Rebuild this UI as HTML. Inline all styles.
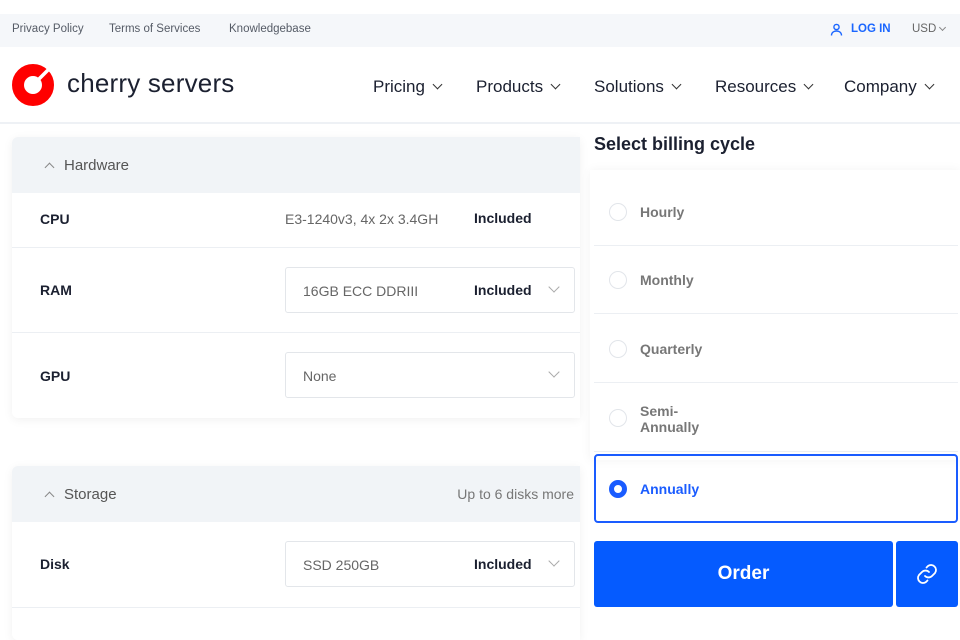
<!DOCTYPE html>
<html><head><style>
*{margin:0;padding:0;box-sizing:border-box}
body{width:960px;height:640px;overflow:hidden;background:#fff;font-family:"Liberation Sans",Arial,sans-serif;position:relative;color:#1b2030}
.abs{position:absolute}
.top{left:0;top:14px;width:960px;height:33px;background:#f5f7fa;font-size:11.5px;color:#555b66}
.top span{position:absolute;top:9px}
.nav{top:48px;left:0;width:960px;height:76px;border-bottom:2px solid #eef1f5}
.nav .m{position:absolute;top:29px;font-size:17px;color:#1b2030}
.chev{display:inline-block;width:7px;height:7px;border-right:1.6px solid #333;border-bottom:1.6px solid #333;transform:rotate(45deg);margin-left:9px;position:relative;top:-4px}
.card{left:12px;width:568px;background:#fff;box-shadow:0 2px 10px rgba(0,0,0,.06);border-radius:6px 0 0 6px;overflow:hidden}
.hd{height:56px;background:#f1f4f7;position:relative;font-size:15px;color:#555}
.hd .t{position:absolute;left:52px;top:20px}
.up{position:absolute;left:34px;top:27px;width:7px;height:7px;border-left:1.3px solid #888;border-top:1.3px solid #888;transform:rotate(45deg)}
.row{position:relative;border-bottom:1px solid #eceff3}
.row .l{position:absolute;left:28px;font-size:14px;font-weight:bold;color:#1b2030}
.sel{position:absolute;left:273px;width:290px;height:46px;border:1px solid #e3e6ea;border-radius:3px;font-size:14px;color:#666}
.sel .v{position:absolute;left:17px;top:15px}
.sel .inc{position:absolute;left:188px;top:14px;font-weight:bold;color:#1b2030}
.sel .dc{position:absolute;right:16px;top:15px;width:8px;height:8px;border-right:1.2px solid #aaa;border-bottom:1.2px solid #aaa;transform:rotate(45deg)}
.opt{left:594px;width:364px;height:68px;border-bottom:1px solid #eceff3;font-size:14px;font-weight:bold;color:#777}
.opt .r{position:absolute;left:15px;top:25px;width:18px;height:18px;border:1.3px solid #e2e5ea;border-radius:50%}
.opt .n{position:absolute;left:46px;top:26px}
</style></head><body>
<div class="abs top">
<span style="left:12px">Privacy Policy</span><span style="left:109px">Terms of Services</span><span style="left:229px">Knowledgebase</span>
<svg style="position:absolute;left:830px;top:9px" width="13" height="13" viewBox="0 0 13 13" fill="none" stroke="#1a66ff" stroke-width="1.4"><circle cx="6.5" cy="4" r="2.6"/><path d="M1.5 12.5c0-3 2.2-4.5 5-4.5s5 1.5 5 4.5"/></svg>
<span style="left:851px;color:#1a66ff;font-weight:bold">LOG IN</span>
<span style="left:912px;color:#666">USD</span>
<span style="left:940px;top:11px;width:5px;height:5px;border-right:1px solid #888;border-bottom:1px solid #888;transform:rotate(45deg)"></span>
</div>
<div class="abs nav">
<svg style="position:absolute;left:12px;top:16px" width="44" height="44" viewBox="0 0 44 44"><circle cx="21" cy="21" r="15" fill="none" stroke="#f00" stroke-width="12"/><path d="M27 15 L40 2" stroke="#fff" stroke-width="3.5"/></svg>
<div style="position:absolute;left:67px;top:20px;font-size:26px;color:#1b2030;letter-spacing:.2px">cherry servers</div>
<span class="m" style="left:373px">Pricing<i class="chev"></i></span>
<span class="m" style="left:476px">Products<i class="chev"></i></span>
<span class="m" style="left:594px">Solutions<i class="chev"></i></span>
<span class="m" style="left:715px">Resources<i class="chev"></i></span>
<span class="m" style="left:844px">Company<i class="chev"></i></span>
</div>

<div class="abs card" style="top:137px;height:281px">
<div class="hd"><i class="up"></i><span class="t">Hardware</span></div>
<div class="row" style="height:55px"><span class="l" style="top:18px">CPU</span>
<span style="position:absolute;left:273px;top:18px;font-size:14px;color:#666">E3-1240v3, 4x 2x 3.4GH</span>
<span style="position:absolute;left:462px;top:17px;font-size:14px;font-weight:bold">Included</span></div>
<div class="row" style="height:85px"><span class="l" style="top:34px">RAM</span>
<div class="sel" style="top:19px"><span class="v">16GB ECC DDRIII</span><span class="inc">Included</span><i class="dc"></i></div></div>
<div class="row" style="height:85px;border:0"><span class="l" style="top:35px">GPU</span>
<div class="sel" style="top:19px"><span class="v">None</span><i class="dc"></i></div></div>
</div>

<div class="abs card" style="top:466px;height:174px">
<div class="hd"><i class="up"></i><span class="t">Storage</span><span style="position:absolute;right:6px;top:20px;font-size:14px;color:#777">Up to 6 disks more</span></div>
<div class="row" style="height:86px"><span class="l" style="top:34px">Disk</span>
<div class="sel" style="top:19px"><span class="v">SSD 250GB</span><span class="inc">Included</span><i class="dc"></i></div></div>
</div>

<div class="abs" style="left:594px;top:134px;font-size:18px;font-weight:bold;color:#1b2030">Select billing cycle</div>
<div class="abs" style="left:590px;top:170px;width:370px;height:290px;box-shadow:0 0 10px rgba(0,0,0,.05)"></div>
<div class="abs opt" style="top:178px"><i class="r"></i><span class="n">Hourly</span></div>
<div class="abs opt" style="top:246px"><i class="r"></i><span class="n">Monthly</span></div>
<div class="abs opt" style="top:315px"><i class="r"></i><span class="n">Quarterly</span></div>
<div class="abs opt" style="top:384px"><i class="r"></i><span class="n" style="top:19px;line-height:16px">Semi-<br>Annually</span></div>
<div class="abs opt" style="top:454px;border:2px solid #1a5cff;border-radius:4px;height:69px"><i class="r" style="border:5px solid #1a5cff;left:13px;top:24px"></i><span class="n" style="color:#1a5cff;left:44px;top:25px">Annually</span></div>
<div class="abs" style="left:594px;top:541px;width:299px;height:66px;background:#055bff;border-radius:3px;color:#fff;font-size:19px;font-weight:bold;text-align:center;line-height:66px">Order</div>
<div class="abs" style="left:896px;top:541px;width:62px;height:66px;background:#055bff;border-radius:3px">
<svg style="position:absolute;left:19px;top:21px" width="24" height="24" viewBox="0 0 24 24" fill="none" stroke="#fff" stroke-width="1.8" stroke-linecap="round"><path d="M10 14a5 5 0 0 0 7 0l3-3a5 5 0 0 0-7-7l-1.5 1.5"/><path d="M14 10a5 5 0 0 0-7 0l-3 3a5 5 0 0 0 7 7l1.5-1.5"/></svg></div>
</body></html>
